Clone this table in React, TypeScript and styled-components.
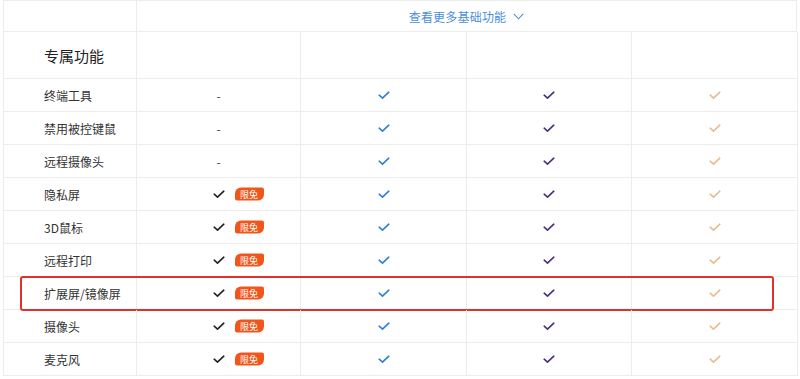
import React from 'react';
import styled, { createGlobalStyle } from 'styled-components';

const GlobalStyle = createGlobalStyle`
  html, body {
    margin: 0;
    padding: 0;
    background: #ffffff;
  }
  body {
    font-family: "Noto Sans CJK SC", "Noto Sans", sans-serif;
    color: #333333;
  }
`;

const COLUMNS = '133px 164px 166px 165px 166px';
const LINE = '#ececec';

type Basic = 'dash' | 'free';

const features: { name: string; basic: Basic; highlight?: boolean }[] = [
  { name: '终端工具', basic: 'dash' },
  { name: '禁用被控键鼠', basic: 'dash' },
  { name: '远程摄像头', basic: 'dash' },
  { name: '隐私屏', basic: 'free' },
  { name: '3D鼠标', basic: 'free' },
  { name: '远程打印', basic: 'free' },
  { name: '扩展屏/镜像屏', basic: 'free', highlight: true },
  { name: '摄像头', basic: 'free' },
  { name: '麦克风', basic: 'free' },
];

const planColors = ['#2f7fdc', '#4b2f7f', '#e9bc8f'];

const Check = ({ color }: { color: string }) => (
  <svg width="12" height="9" viewBox="0 0 12 9">
    <polyline
      points="1.2,4.2 4.5,7.2 10.8,1.2"
      fill="none"
      stroke={color}
      strokeWidth="1.6"
      strokeLinecap="round"
      strokeLinejoin="round"
    />
  </svg>
);

const Chevron = () => (
  <svg width="11" height="7" viewBox="0 0 11 7">
    <polyline points="0.8,0.8 5.5,5.8 10.2,0.8" fill="none" stroke="#4a8fdb" strokeWidth="1.1" />
  </svg>
);

const App = () => {
  return (
    <>
      <GlobalStyle />
      <Table>
        <TopRow>
          <Cell />
          <MoreCell>
            <MoreLink>
              查看更多基础功能
              <Chevron />
            </MoreLink>
          </MoreCell>
        </TopRow>
        <HeaderRow>
          <SectionTitle>专属功能</SectionTitle>
          <Cell />
          <Cell />
          <Cell />
          <Cell />
        </HeaderRow>
        {features.map((f) => (
          <Row key={f.name}>
            <Label>{f.name}</Label>
            <Cell>
              {f.basic === 'dash' ? (
                <Dash>-</Dash>
              ) : (
                <FreeMark>
                  <Check color="#222222" />
                  <Badge>限免</Badge>
                </FreeMark>
              )}
            </Cell>
            {planColors.map((c) => (
              <Cell key={c}>
                <Check color={c} />
              </Cell>
            ))}
            {f.highlight && <Highlight />}
          </Row>
        ))}
      </Table>
    </>
  );
};

export default App;

const Table = styled.div`
  width: 794px;
  margin-left: 3px;
  border-left: 1px solid ${LINE};
  border-top: 1px solid ${LINE};
  box-sizing: border-box;
`;

const Row = styled.div`
  position: relative;
  display: grid;
  grid-template-columns: ${COLUMNS};
  height: 33px;
`;

const TopRow = styled.div`
  display: grid;
  grid-template-columns: 133px 1fr;
  height: 31px;
`;

const HeaderRow = styled(Row)`
  height: 47px;
`;

const Cell = styled.div`
  display: flex;
  align-items: center;
  justify-content: center;
  border-right: 1px solid ${LINE};
  border-bottom: 1px solid ${LINE};
  box-sizing: border-box;
  min-width: 0;
`;

const MoreCell = styled(Cell)`
  padding-top: 1px;
`;

const MoreLink = styled.div`
  display: flex;
  align-items: center;
  gap: 7px;
  font-size: 12px;
  color: #4a8fdb;
  letter-spacing: 0.2px;
`;

const Label = styled(Cell)`
  justify-content: flex-start;
  padding-left: 40px;
  font-size: 12px;
  color: #333333;
`;

const SectionTitle = styled(Label)`
  font-size: 15px;
  color: #222222;
`;

const Dash = styled.span`
  font-size: 12px;
  color: #444444;
`;

const FreeMark = styled.div`
  position: relative;
  display: flex;
  align-items: center;
`;

const Badge = styled.span`
  position: absolute;
  left: 22px;
  top: 50%;
  transform: translateY(-50%);
  width: 29px;
  height: 13px;
  display: flex;
  align-items: center;
  justify-content: center;
  background: #f0561c;
  color: #ffffff;
  font-size: 9px;
  line-height: 1;
  border-radius: 6px 2px 6px 2px;
`;

const Highlight = styled.div`
  position: absolute;
  left: 16px;
  right: 23px;
  top: -1px;
  bottom: -1px;
  border: 2px solid #e2302a;
  border-radius: 3px;
  pointer-events: none;
`;
